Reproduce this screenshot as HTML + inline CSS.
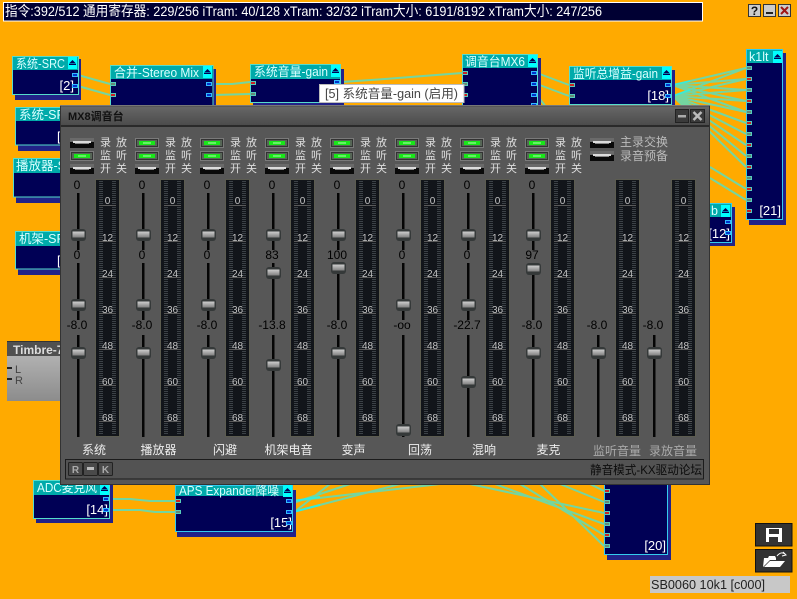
<!DOCTYPE html>
<html><head><meta charset="utf-8"><style>
html,body{margin:0;padding:0;background:#ffaa00;width:797px;height:599px;overflow:hidden}
svg{display:block;font-family:"Liberation Sans","WenQuanYi Zen Hei","Noto Sans CJK SC",sans-serif}
</style></head><body>
<svg width="797" height="599" viewBox="0 0 797 599" xmlns="http://www.w3.org/2000/svg">
<defs>
<linearGradient id="hg" x1="0" y1="0" x2="0" y2="1"><stop offset="0" stop-color="#d0d0d0"/><stop offset="1" stop-color="#808080"/></linearGradient>
<linearGradient id="tg" x1="0" y1="0" x2="0" y2="1"><stop offset="0" stop-color="#666"/><stop offset="1" stop-color="#4c4c4c"/></linearGradient>
<linearGradient id="tb" x1="0" y1="0" x2="0" y2="1"><stop offset="0" stop-color="#bdbdbd"/><stop offset="1" stop-color="#8c8c8c"/></linearGradient>
<g id="pr"><rect x="0.5" y="-1.5" width="5" height="3" fill="#cc2222" stroke="#55ccbb"/></g>
<g id="pg"><rect x="0.5" y="-1.5" width="5" height="3" fill="#668877" stroke="#55ccbb"/></g>
<g id="po"><rect x="0.5" y="-1.5" width="5" height="3" fill="#0033cc" stroke="#33bbff"/></g>
<g id="ar"><rect width="9" height="12" fill="#00ffff"/><path d="M1 6.5L4.5 3L8 6.5Z" fill="#000055"/><rect x="1" y="7" width="7" height="1" fill="#000055"/></g>
<g id="bon"><rect width="24" height="10" fill="#7a7a7a"/><rect x="1.500" y="1.500" width="21" height="7" fill="#566656" stroke="#333"/><rect x="4" y="3" width="16" height="4" fill="#19e619"/><rect x="8" y="4.500" width="8" height="1" fill="#b0ffb0"/></g>
<g id="bof"><rect width="24" height="10" fill="#0a0a0a"/><rect x="0" y="0" width="24" height="4" fill="#6a6a6a"/><rect x="3" y="3" width="18" height="2" fill="#dcdcdc"/><rect x="5" y="5" width="14" height="1" fill="#888"/></g>
<g id="h"><rect x="-7.500" y="-6" width="15" height="12" rx="3" fill="#353939"/><rect x="-6" y="-3.500" width="12" height="6" fill="url(#hg)"/></g>
<g id="m"><rect x="95.500" y="179.500" width="24" height="257" fill="#12151a" stroke="#5c5c50"/>
<line x1="101" y1="181" x2="101" y2="435" stroke="#3c4247" stroke-width="4" stroke-dasharray="1 1"/>
<line x1="114" y1="181" x2="114" y2="435" stroke="#3c4247" stroke-width="4" stroke-dasharray="1 1"/>
<path d="M99 205.500h17M99 241.500h17M99 277.500h17M99 313.500h17M99 349.500h17M99 385.500h17M99 421.500h17" stroke="#5a5a5a"/>
<g fill="#c4c4c4" font-size="10" text-anchor="middle"><text x="107.500" y="204">0</text><text x="107.500" y="241">12</text><text x="107.500" y="277">24</text><text x="107.500" y="313">36</text><text x="107.500" y="349">48</text><text x="107.500" y="385">60</text><text x="107.500" y="421">68</text></g></g>
<g id="t3"><rect x="77" y="193" width="2.500" height="57" fill="#050505"/><rect x="77" y="263" width="2.500" height="57" fill="#050505"/><rect x="77" y="335" width="2.500" height="102" fill="#050505"/></g>
<g id="t1"><rect x="77" y="335" width="2.500" height="102" fill="#050505"/></g>
<g id="bt"><rect x="0.500" y="0.500" width="14" height="13" rx="1" fill="#4a4a4a" stroke="#222"/></g>
</defs>

<rect width="797" height="599" fill="#ffaa00"/>

<!-- status bar -->
<rect x="3.500" y="2.500" width="699" height="18.500" fill="#000033" stroke="#fff"/>
<text x="5" y="16" font-size="14" fill="#fff" textLength="597" lengthAdjust="spacingAndGlyphs">指令:392/512 通用寄存器: 229/256 iTram: 40/128 xTram: 32/32 iTram大小: 6191/8192 xTram大小: 247/256</text>
<g>
<rect x="748.500" y="4.500" width="12" height="12" fill="#ccc" stroke="#333"/><text x="754.500" y="15" font-size="12" font-weight="bold" text-anchor="middle" fill="#111">?</text>
<rect x="763.500" y="4.500" width="12" height="12" fill="#ccc" stroke="#333"/><rect x="766" y="12" width="7" height="2" fill="#222"/>
<rect x="778.500" y="4.500" width="12" height="12" fill="#ccc" stroke="#333"/><path d="M781 7L788 14M788 7L781 14" stroke="#a01515" stroke-width="2"/>
</g>

<!-- wires -->
<g fill="none" stroke="#74d6a0" stroke-width="2">
<path d="M78 75L110 84M78 86L110 95"/>
<path d="M213 84L232 84L250 82M213 95L250 94"/>
<path d="M341 82L385 79L462 73"/>
<path d="M537 73L569 85M537 84L569 96M537 95L546 107"/>
<path d="M673 85L746 68M673 96L746 68M673 85L746 79M673 96L746 79M673 85L746 90M673 96L746 90M673 85L746 101M673 96L746 101M673 85L746 112M673 96L746 112M673 96L746 123M673 96L746 134M673 96L746 145M673 96L746 156M673 96L746 167M710 178L746 200M710 167L746 189"/>
<path d="M110 499L130 499L150 501L175 501M110 510L140 510L155 512L175 512"/>
<path d="M293 501L440 484M293 512L400 484M293 503L350 484M293 513L330 484"/>
<path d="M470 484L604 513M495 484L604 524M520 484L604 535M540 484L604 546M560 484L604 502M590 484L604 491"/>
<path d="M712 245L720 240" stroke="#66ddee"/>
</g>
<path d="M293 501L320 497M293 512L320 505" stroke="#33eedd" stroke-width="2" fill="none"/>
<path d="M673 85L690 81M673 96L690 90" stroke="#33eedd" stroke-width="1.500" fill="none"/>

<!-- nodes -->
<g>
<rect x="15" y="59" width="66" height="41" fill="#222288"/>
<rect x="12.500" y="56.500" width="66" height="38" fill="#000055" stroke="#55ddcc"/>
<rect x="13" y="57" width="65" height="13" fill="#00aaaa"/>
<text x="16" y="68" font-size="12.500" fill="#d8ffff" textLength="49" lengthAdjust="spacingAndGlyphs">系统-SRC</text>
<use href="#ar" x="68" y="57"/><text x="74" y="90" font-size="13" fill="#fff" text-anchor="end">[2]</text>
<use href="#po" x="72" y="75"/><use href="#po" x="72" y="86"/>
</g>
<g>
<rect x="18" y="110" width="50" height="41" fill="#222288"/>
<rect x="15.500" y="107.500" width="50" height="37.500" fill="#000055" stroke="#55ddcc"/>
<rect x="16" y="108" width="49" height="13" fill="#00aaaa"/>
<text x="19" y="119" font-size="12.500" fill="#d8ffff">系统-SR</text>
<text x="57" y="141" font-size="13" fill="#fff">[</text>
</g>
<g>
<rect x="16" y="162" width="50" height="41" fill="#222288"/>
<rect x="13.500" y="158.500" width="50" height="38.500" fill="#000055" stroke="#55ddcc"/>
<rect x="14" y="159" width="49" height="14" fill="#00aaaa"/>
<text x="16" y="170" font-size="12.500" fill="#d8ffff">播放器-S</text>
</g>
<g>
<rect x="18" y="235" width="50" height="40" fill="#222288"/>
<rect x="15.500" y="231.500" width="50" height="37.500" fill="#000055" stroke="#55ddcc"/>
<rect x="16" y="232" width="49" height="14" fill="#00aaaa"/>
<text x="19" y="243" font-size="12.500" fill="#d8ffff">机架-SR</text>
<text x="57" y="265" font-size="13" fill="#fff">[</text>
</g>
<g>
<rect x="7" y="341" width="56" height="60" fill="url(#tb)"/>
<rect x="7" y="341" width="56" height="15" fill="#505050"/>
<rect x="7" y="341" width="56" height="1" fill="#333"/>
<text x="13" y="354" font-size="12" font-weight="bold" fill="#ddd">Timbre-7</text>
<text x="15" y="373" font-size="11" fill="#444">L</text><text x="15" y="384" font-size="11" fill="#444">R</text>
<rect x="7" y="367" width="5" height="2" fill="#222"/><rect x="7" y="378" width="5" height="2" fill="#222"/>
</g>
<g>
<rect x="113" y="69" width="103" height="40" fill="#222288"/>
<rect x="110.500" y="65.500" width="102.500" height="40" fill="#000055" stroke="#55ddcc"/>
<rect x="111" y="66" width="102" height="13" fill="#00aaaa"/>
<text x="114" y="77" font-size="12.500" fill="#d8ffff" textLength="85" lengthAdjust="spacingAndGlyphs">合并-Stereo Mix</text>
<use href="#ar" x="203" y="66"/>
<use href="#pg" x="110" y="84"/><use href="#pr" x="110" y="95"/>
<use href="#po" x="206" y="84"/><use href="#po" x="206" y="95"/>
</g>
<g>
<rect x="253" y="69" width="91" height="36" fill="#222288"/>
<rect x="250.500" y="64.500" width="90" height="38" fill="#000055" stroke="#55ddcc"/>
<rect x="251" y="65" width="89" height="14" fill="#00aaaa"/>
<text x="254" y="76" font-size="12.500" fill="#d8ffff" textLength="74" lengthAdjust="spacingAndGlyphs">系统音量-gain</text>
<use href="#ar" x="331" y="65"/>
<use href="#pr" x="250" y="83"/><use href="#pg" x="250" y="94"/><use href="#po" x="334" y="82"/>
</g>
<g>
<rect x="465" y="58" width="76" height="50" fill="#222288"/>
<rect x="462.500" y="54.500" width="75" height="52" fill="#000055" stroke="#55ddcc"/>
<rect x="463" y="55" width="74" height="13" fill="#00aaaa"/>
<text x="465" y="66" font-size="12.500" fill="#d8ffff" textLength="60" lengthAdjust="spacingAndGlyphs">调音台MX6</text>
<use href="#ar" x="528" y="55"/>
<use href="#pr" x="462" y="73"/><use href="#pg" x="462" y="84"/><use href="#pr" x="462" y="95"/>
<use href="#po" x="531" y="73"/><use href="#po" x="531" y="84"/><use href="#po" x="531" y="95"/><use href="#po" x="531" y="105"/>
</g>
<g>
<rect x="572" y="70" width="103" height="38" fill="#222288"/>
<rect x="569.500" y="66.500" width="102" height="38" fill="#000055" stroke="#55ddcc"/>
<rect x="570" y="67" width="101" height="13" fill="#00aaaa"/>
<text x="573" y="78" font-size="12.500" fill="#d8ffff" textLength="85" lengthAdjust="spacingAndGlyphs">监听总增益-gain</text>
<use href="#ar" x="662" y="67"/>
<text x="669" y="100" font-size="13" fill="#fff" text-anchor="end">[18]</text>
<use href="#pr" x="569" y="85"/><use href="#pg" x="569" y="96"/>
<use href="#po" x="665" y="85"/><use href="#po" x="665" y="96"/>
</g>
<g>
<rect x="749" y="53" width="37" height="172" fill="#222288"/>
<rect x="746.500" y="49.500" width="36" height="170" fill="#000055" stroke="#33ccee"/>
<rect x="747" y="50" width="35" height="13" fill="#00aaaa"/>
<text x="749" y="61" font-size="12.500" fill="#d8ffff">k1lt</text>
<use href="#ar" x="773" y="51"/>
<text x="781" y="215" font-size="13" fill="#fff" text-anchor="end">[21]</text>
<use href="#pg" x="746" y="68"/><use href="#pr" x="746" y="79"/><use href="#pg" x="746" y="90"/><use href="#pr" x="746" y="101"/><use href="#pg" x="746" y="112"/><use href="#pr" x="746" y="123"/><use href="#pg" x="746" y="134"/><use href="#pr" x="746" y="145"/><use href="#pg" x="746" y="156"/><use href="#pr" x="746" y="167"/><use href="#pg" x="746" y="178"/><use href="#pr" x="746" y="189"/><use href="#pg" x="746" y="200"/><use href="#pr" x="746" y="211"/>
</g>
<g>
<rect x="690" y="207" width="45" height="39" fill="#222288"/>
<rect x="680.500" y="203.500" width="51" height="39" fill="#000055" stroke="#33ccee"/>
<rect x="681" y="204" width="50" height="13" fill="#00aaaa"/>
<text x="711" y="215" font-size="12.500" fill="#d8ffff">b</text>
<use href="#ar" x="721" y="205"/>
<text x="730" y="238" font-size="13" fill="#fff" text-anchor="end">[12]</text>
<use href="#po" x="725" y="222"/><use href="#po" x="725" y="233"/>
</g>
<g>
<rect x="36" y="484" width="77" height="39" fill="#222288"/>
<rect x="33.500" y="480.500" width="76" height="38" fill="#000055" stroke="#55ddcc"/>
<rect x="34" y="481" width="75" height="14" fill="#00aaaa"/>
<text x="37" y="492" font-size="12.500" fill="#d8ffff" textLength="60" lengthAdjust="spacingAndGlyphs">ADC麦克风</text>
<use href="#ar" x="100" y="483"/>
<text x="108" y="514" font-size="13" fill="#fff" text-anchor="end">[14]</text>
<use href="#po" x="103" y="499"/><use href="#po" x="103" y="510"/>
</g>
<g>
<rect x="177" y="490" width="119" height="47" fill="#222288"/>
<rect x="175.500" y="485.500" width="117" height="46" fill="#000055" stroke="#33ccee"/>
<rect x="176" y="486" width="116" height="10" fill="#00aaaa"/>
<text x="179" y="495" font-size="12.500" fill="#d8ffff" textLength="100" lengthAdjust="spacingAndGlyphs">APS Expander降噪</text>
<use href="#ar" x="283" y="485"/>
<text x="292" y="527" font-size="13" fill="#fff" text-anchor="end">[15]</text>
<use href="#pr" x="175" y="501"/><use href="#pg" x="175" y="512"/>
<use href="#po" x="286" y="501"/><use href="#po" x="286" y="512"/><use href="#po" x="286" y="523"/>
</g>
<g>
<rect x="607" y="470" width="64" height="90" fill="#222288"/>
<rect x="604.500" y="470.500" width="63" height="84" fill="#000055" stroke="#33ccee"/>
<text x="666" y="550" font-size="13" fill="#fff" text-anchor="end">[20]</text>
<use href="#pr" x="604" y="491"/><use href="#pg" x="604" y="502"/><use href="#pr" x="604" y="513"/><use href="#pg" x="604" y="524"/><use href="#pr" x="604" y="535"/><use href="#pg" x="604" y="546"/>
</g>

<!-- tooltip -->
<rect x="319.500" y="84.500" width="144.500" height="18" fill="#fff" stroke="#bbb"/>
<text x="325" y="98" font-size="12.500" fill="#444" textLength="133" lengthAdjust="spacingAndGlyphs">[5] 系统音量-gain (启用)</text>

<!-- mixer window -->
<rect x="60" y="105" width="650" height="380" fill="#333"/>
<rect x="61" y="106" width="648" height="378" fill="#575757"/>
<rect x="61" y="107" width="648" height="18" fill="url(#tg)"/>
<rect x="61" y="125" width="648" height="2" fill="#2a2a2a"/>
<rect x="60" y="105" width="650" height="1" fill="#777"/>
<text x="68" y="120" font-size="11" font-weight="bold" fill="#111">MX8调音台</text>
<rect x="675.500" y="109.500" width="13" height="13" fill="#3a3a3a" stroke="#222"/><rect x="678" y="115" width="8" height="2.500" fill="#aaa"/>
<rect x="690.500" y="109.500" width="14" height="13" fill="#3a3a3a" stroke="#222"/><path d="M693.500 112L701.500 120M701.500 112L693.500 120" stroke="#bbb" stroke-width="2.500"/>

<g>
<use href="#m"/><use href="#t3"/>
<use href="#bof" x="70" y="138"/><use href="#bon" x="70" y="151"/><use href="#bof" x="70" y="164"/>
<g font-size="11" fill="#ddd"><text x="100 116" y="146">录放</text><text x="100 116" y="159">监听</text><text x="100 116" y="172">开关</text></g>
<g font-size="12" fill="#000" text-anchor="middle"><text x="77" y="189">0</text><text x="77" y="259">0</text><text x="77" y="329">-8.0</text></g>
<use href="#h" x="78.500" y="235"/><use href="#h" x="78.500" y="305"/><use href="#h" x="78.500" y="353"/>
</g>
<g transform="translate(65 0)">
<use href="#m"/><use href="#t3"/>
<use href="#bon" x="70" y="138"/><use href="#bon" x="70" y="151"/><use href="#bof" x="70" y="164"/>
<g font-size="11" fill="#ddd"><text x="100 116" y="146">录放</text><text x="100 116" y="159">监听</text><text x="100 116" y="172">开关</text></g>
<g font-size="12" fill="#000" text-anchor="middle"><text x="77" y="189">0</text><text x="77" y="259">0</text><text x="77" y="329">-8.0</text></g>
<use href="#h" x="78.500" y="235"/><use href="#h" x="78.500" y="305"/><use href="#h" x="78.500" y="353"/>
</g>
<g transform="translate(130 0)">
<use href="#m"/><use href="#t3"/>
<use href="#bon" x="70" y="138"/><use href="#bon" x="70" y="151"/><use href="#bof" x="70" y="164"/>
<g font-size="11" fill="#ddd"><text x="100 116" y="146">录放</text><text x="100 116" y="159">监听</text><text x="100 116" y="172">开关</text></g>
<g font-size="12" fill="#000" text-anchor="middle"><text x="77" y="189">0</text><text x="77" y="259">0</text><text x="77" y="329">-8.0</text></g>
<use href="#h" x="78.500" y="235"/><use href="#h" x="78.500" y="305"/><use href="#h" x="78.500" y="353"/>
</g>
<g transform="translate(195 0)">
<use href="#m"/><use href="#t3"/>
<use href="#bon" x="70" y="138"/><use href="#bon" x="70" y="151"/><use href="#bof" x="70" y="164"/>
<g font-size="11" fill="#ddd"><text x="100 116" y="146">录放</text><text x="100 116" y="159">监听</text><text x="100 116" y="172">开关</text></g>
<g font-size="12" fill="#000" text-anchor="middle"><text x="77" y="189">0</text><text x="77" y="259">83</text><text x="77" y="329">-13.8</text></g>
<use href="#h" x="78.500" y="235"/><use href="#h" x="78.500" y="273"/><use href="#h" x="78.500" y="365"/>
</g>
<g transform="translate(260 0)">
<use href="#m"/><use href="#t3"/>
<use href="#bon" x="70" y="138"/><use href="#bon" x="70" y="151"/><use href="#bof" x="70" y="164"/>
<g font-size="11" fill="#ddd"><text x="100 116" y="146">录放</text><text x="100 116" y="159">监听</text><text x="100 116" y="172">开关</text></g>
<g font-size="12" fill="#000" text-anchor="middle"><text x="77" y="189">0</text><text x="77" y="259">100</text><text x="77" y="329">-8.0</text></g>
<use href="#h" x="78.500" y="235"/><use href="#h" x="78.500" y="268"/><use href="#h" x="78.500" y="353"/>
</g>
<g transform="translate(325 0)">
<use href="#m"/><use href="#t3"/>
<use href="#bon" x="70" y="138"/><use href="#bon" x="70" y="151"/><use href="#bof" x="70" y="164"/>
<g font-size="11" fill="#ddd"><text x="100 116" y="146">录放</text><text x="100 116" y="159">监听</text><text x="100 116" y="172">开关</text></g>
<g font-size="12" fill="#000" text-anchor="middle"><text x="77" y="189">0</text><text x="77" y="259">0</text><text x="77" y="329">-oo</text></g>
<use href="#h" x="78.500" y="235"/><use href="#h" x="78.500" y="305"/><use href="#h" x="78.500" y="430"/>
</g>
<g transform="translate(390 0)">
<use href="#m"/><use href="#t3"/>
<use href="#bon" x="70" y="138"/><use href="#bon" x="70" y="151"/><use href="#bof" x="70" y="164"/>
<g font-size="11" fill="#ddd"><text x="100 116" y="146">录放</text><text x="100 116" y="159">监听</text><text x="100 116" y="172">开关</text></g>
<g font-size="12" fill="#000" text-anchor="middle"><text x="77" y="189">0</text><text x="77" y="259">0</text><text x="77" y="329">-22.7</text></g>
<use href="#h" x="78.500" y="235"/><use href="#h" x="78.500" y="305"/><use href="#h" x="78.500" y="382"/>
</g>
<g transform="translate(455 0)">
<use href="#m"/><use href="#t3"/>
<use href="#bon" x="70" y="138"/><use href="#bon" x="70" y="151"/><use href="#bof" x="70" y="164"/>
<g font-size="11" fill="#ddd"><text x="100 116" y="146">录放</text><text x="100 116" y="159">监听</text><text x="100 116" y="172">开关</text></g>
<g font-size="12" fill="#000" text-anchor="middle"><text x="77" y="189">0</text><text x="77" y="259">97</text><text x="77" y="329">-8.0</text></g>
<use href="#h" x="78.500" y="235"/><use href="#h" x="78.500" y="269"/><use href="#h" x="78.500" y="353"/>
</g>
<g transform="translate(520 0)">
<use href="#m"/><use href="#t1"/>
<text x="77" y="329" font-size="12" fill="#000" text-anchor="middle">-8.0</text>
<use href="#h" x="78.500" y="353"/>
</g>
<g transform="translate(576 0)">
<use href="#m"/><use href="#t1"/>
<text x="77" y="329" font-size="12" fill="#000" text-anchor="middle">-8.0</text>
<use href="#h" x="78.500" y="353"/>
</g>
<use href="#bof" x="590" y="138"/><use href="#bof" x="590" y="151"/>
<g font-size="12" fill="#bbb"><text x="620" y="146">主录交换</text><text x="620" y="160">录音预备</text></g>
<g font-size="12" fill="#eee" text-anchor="middle">
<text x="94" y="454">系统</text><text x="158.500" y="454">播放器</text><text x="225" y="454">闪避</text><text x="288.500" y="454">机架电音</text><text x="353.500" y="454">变声</text><text x="420" y="454">回荡</text><text x="484" y="454">混响</text><text x="548.500" y="454">麦克</text>
</g>
<g font-size="12" fill="#aaa" text-anchor="middle"><text x="617" y="455">监听音量</text><text x="673" y="455">录放音量</text></g>
<rect x="65.500" y="459.500" width="638" height="19.500" fill="#535353" stroke="#1c1c1c"/>
<g><use href="#bt" x="68" y="462"/><use href="#bt" x="83" y="462"/><use href="#bt" x="98" y="462"/>
<text x="75.500" y="473" font-size="10" font-weight="bold" fill="#aaa" text-anchor="middle">R</text>
<rect x="87" y="467" width="7" height="3" fill="#bbb"/>
<text x="105.500" y="473" font-size="10" font-weight="bold" fill="#aaa" text-anchor="middle">K</text></g>
<text x="590" y="474" font-size="12" fill="#0c0c0c" textLength="112" lengthAdjust="spacingAndGlyphs">静音模式-KX驱动论坛</text>

<rect x="755.500" y="523.500" width="36.500" height="22.500" fill="#333" stroke="#111"/>
<path d="M766 528H782V542H766ZM769 529V534H779V529ZM769 537V542H778V537Z" fill="#fff" fill-rule="evenodd"/>
<rect x="755.500" y="549.500" width="36.500" height="22.500" fill="#333" stroke="#111"/>
<path d="M764 558H768L769 556H775L776 558V560H770L763 567Z M764 567L770 561H785L780 567Z" fill="#fff"/>
<path d="M777 556Q781 551 785 554M783 552L786 555L782 556" fill="none" stroke="#fff"/>
<rect x="650" y="576" width="140" height="17" fill="#c8c8c8"/>
<text x="651" y="589" font-size="13" fill="#222" textLength="114" lengthAdjust="spacingAndGlyphs">SB0060 10k1 [c000]</text>
</svg>
</body></html>
